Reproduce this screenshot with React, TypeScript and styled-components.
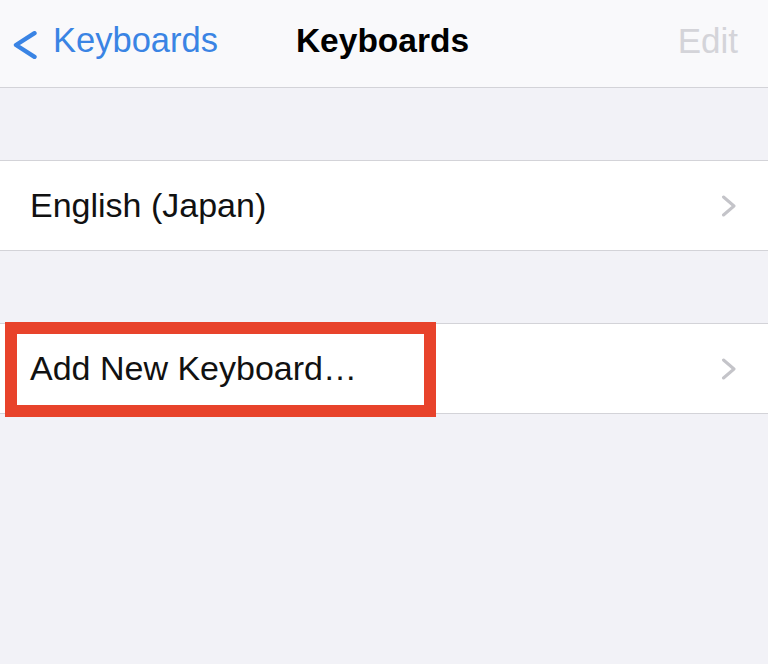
import React from 'react'
import styled, { createGlobalStyle } from 'styled-components'

const GlobalStyle = createGlobalStyle`
  html, body {
    margin: 0;
    padding: 0;
    background: #f2f2f7;
  }
  body {
    font-family: 'Liberation Sans', Arial, sans-serif;
    -webkit-font-smoothing: antialiased;
  }
`

const colors = {
  blue: '#3a84e4',
  separator: '#d3d3d8',
  groupBg: '#f2f2f7',
  chevron: '#c4c4c9',
  highlight: '#e8432b',
}

const rows = [
  { label: 'English (Japan)', highlighted: false },
  { label: 'Add New Keyboard…', highlighted: true },
]

const Screen = styled.div`
  width: 768px;
  height: 664px;
  background: ${colors.groupBg};
  overflow: hidden;
`

const NavBar = styled.header`
  height: 88px;
  display: grid;
  grid-template-columns: 1fr auto 1fr;
  align-items: center;
  padding: 0 30px 6px 13px;
  box-sizing: border-box;
  background: #f9f9fb;
  border-bottom: 1px solid ${colors.separator};
`

const BackButton = styled.div`
  display: flex;
  align-items: center;
  gap: 16px;
  color: ${colors.blue};
  font-size: 34.5px;
  justify-self: start;

  svg {
    margin-top: 9px;
  }
`

const Title = styled.h1`
  margin: 0 0 0 14px;
  font-size: 33.5px;
  font-weight: 700;
  color: #000;
`

const EditButton = styled.div`
  justify-self: end;
  font-size: 35px;
  color: #d4d4d9;
`

const Section = styled.section`
  margin-top: 72px;
  background: #fff;
  border-top: 1px solid ${colors.separator};
  border-bottom: 1px solid ${colors.separator};
`

const Row = styled.div`
  position: relative;
  height: 89px;
  display: flex;
  align-items: center;
  justify-content: space-between;
  padding: 0 31px 0 30px;
  font-size: 34px;
  color: #111;
`

const Highlight = styled.div`
  position: absolute;
  left: 5px;
  top: -2px;
  width: 431px;
  height: 95px;
  box-sizing: border-box;
  border: 12px solid ${colors.highlight};
  pointer-events: none;
`

const BackChevron = () => (
  <svg width="24" height="28" viewBox="0 0 24 28">
    <path
      d="M21.5 2.2 L3 14 L21.5 25.8"
      fill="none"
      stroke={colors.blue}
      strokeWidth="4.4"
      strokeLinecap="round"
      strokeLinejoin="round"
    />
  </svg>
)

const Chevron = () => (
  <svg width="16" height="22" viewBox="0 0 16 22">
    <path
      d="M2.5 2 L13 11 L2.5 20"
      fill="none"
      stroke={colors.chevron}
      strokeWidth="3"
      strokeLinecap="round"
      strokeLinejoin="round"
    />
  </svg>
)

export default function App() {
  return (
    <>
      <GlobalStyle />
      <Screen>
        <NavBar>
          <BackButton>
            <BackChevron />
            <span>Keyboards</span>
          </BackButton>
          <Title>Keyboards</Title>
          <EditButton>Edit</EditButton>
        </NavBar>
        {rows.map((row) => (
          <Section key={row.label}>
            <Row>
              <span>{row.label}</span>
              <Chevron />
              {row.highlighted && <Highlight />}
            </Row>
          </Section>
        ))}
      </Screen>
    </>
  )
}
